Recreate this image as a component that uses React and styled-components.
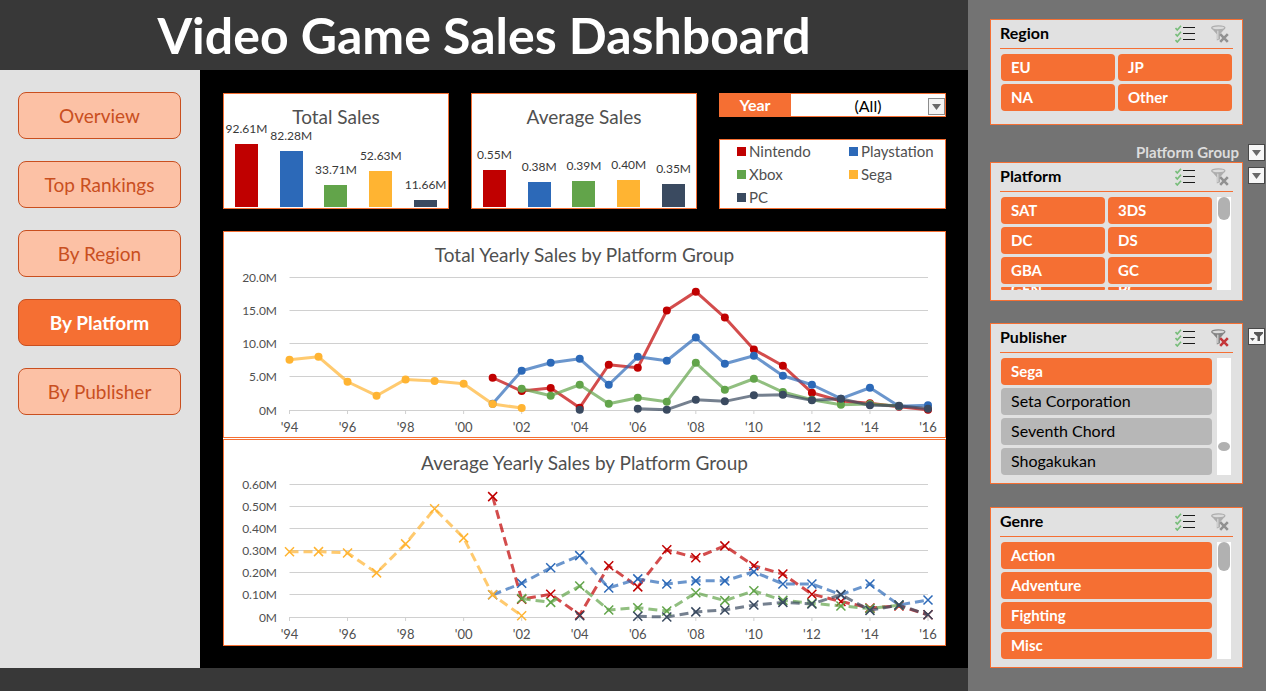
import React from "react";
import styled, { createGlobalStyle, css } from "styled-components";

const c = {
  orange: "#f56f33",
  peach: "#fcc1a5",
  rust: "#c94f1f",
  dark: "#383838",
  mid: "#737373",
  light: "#e1e1e1",
  text: "#505050",
  nintendo: "#c00000",
  playstation: "#2c69b8",
  xbox: "#62a44a",
  sega: "#ffb432",
  pc: "#3a4a60",
};

const Global = createGlobalStyle`
  *, *::before, *::after { box-sizing: border-box; }
  body { margin: 0; background: ${c.mid}; font-family: Lato, "Open Sans", sans-serif; }
  button, select { font-family: inherit; }
`;

const Page = styled.div`
  display: grid;
  grid-template-columns: minmax(0, 1fr) 298px;
  min-height: 100vh;
`;

const Left = styled.div`
  display: flex;
  flex-direction: column;
  background: ${c.dark};
`;

const Header = styled.header`
  display: flex;
  align-items: center;
  justify-content: center;
  height: 70px;
`;

const Title = styled.h1`
  margin: 0;
  color: #fff;
  font-size: 50px;
  line-height: 68px;
  font-weight: 700;
`;

const Body = styled.div`
  flex: 1;
  display: grid;
  grid-template-columns: 200px minmax(0, 1fr);
`;

const Footer = styled.footer`
  height: 23px;
`;

const Nav = styled.nav`
  display: flex;
  flex-direction: column;
  gap: 22px;
  padding: 22px 19px 22px 18px;
  background: ${c.light};
`;

const NavButton = styled.button`
  height: 47px;
  padding: 0;
  border: 1px solid ${c.rust};
  border-radius: 8px;
  background: ${(p) => (p.$active ? c.orange : c.peach)};
  color: ${(p) => (p.$active ? "#fff" : c.rust)};
  font-size: 19px;
  font-weight: ${(p) => (p.$active ? 700 : 400)};
`;

const Board = styled.main`
  display: flex;
  flex-direction: column;
  gap: 22px;
  padding: 23px 22px 22px 23px;
  background: #000;
`;

const TopRow = styled.div`
  display: grid;
  grid-template-columns: minmax(0, 226fr) minmax(0, 226fr) minmax(0, 227fr);
  gap: 22px;
`;

const Card = styled.section`
  border: 1px solid ${c.orange};
  background: #fff;
`;

const BarCard = styled(Card)`
  display: grid;
  height: 116px;

  > * {
    grid-area: 1 / 1;
  }
`;

const CardTitle = styled.h2`
  margin: 0;
  padding-top: 11px;
  color: ${c.text};
  font-size: 19px;
  line-height: 24px;
  font-weight: 400;
  text-align: center;
`;

const Bars = styled.div`
  display: grid;
  grid-template-columns: repeat(5, minmax(0, 1fr));
  align-items: end;
  padding-bottom: 1px;
`;

const BarColumn = styled.div`
  display: flex;
  flex-direction: column;
  align-items: center;
  gap: 7px;
`;

const BarLabel = styled.span`
  color: #383838;
  font-size: 12px;
  line-height: 16px;
  white-space: nowrap;
`;

const Bar = styled.div`
  width: 23px;
  background: ${(p) => p.$color};
`;

const FilterColumn = styled.div`
  display: flex;
  flex-direction: column;
  gap: 22px;
`;

const YearFilter = styled.div`
  display: grid;
  grid-template-columns: 72px 1fr;
  height: 24px;
`;

const YearLabel = styled.label`
  background: ${c.orange};
  color: #fff;
  font-size: 16px;
  line-height: 24px;
  font-weight: 700;
  text-align: center;
`;

const SelectWrap = styled.div`
  position: relative;
  display: grid;
`;

const YearSelect = styled.select`
  appearance: none;
  padding: 0;
  border: 1px solid ${c.orange};
  border-left: 0;
  border-radius: 0;
  background: #fff;
  color: #000;
  font-size: 16px;
  text-align: center;
  text-align-last: center;
`;

const SelectArrow = styled.span`
  position: absolute;
  right: 1px;
  bottom: 2px;
  display: grid;
  place-items: center;
  width: 17px;
  height: 17px;
  border: 1px solid #8c8c8c;
  background: #f4f4f4;
  pointer-events: none;
`;

const Legend = styled(Card)`
  flex: 1;
  display: grid;
  grid-template-columns: 1fr 1fr;
  grid-auto-rows: 22px;
  row-gap: 1px;
  padding-left: 17px;
`;

const LegendItem = styled.div`
  display: flex;
  align-items: center;
  gap: 3px;
  padding-left: ${(p) => (p.$second ? "8px" : "0")};
  color: ${c.text};
  font-size: 15px;
  line-height: 20px;
`;

const Swatch = styled.span`
  width: 9px;
  height: 9px;
  background: ${(p) => p.$color};
`;

const ChartStack = styled.div`
  display: grid;
  gap: 1px;
  background: #fff;
`;

const Plot = styled.svg`
  display: block;
  width: 100%;
  height: auto;
`;

const AxisText = styled.text`
  fill: ${c.text};
  font-size: ${(p) => p.$size}px;
`;

const Aside = styled.aside`
  display: grid;
  grid-template-columns: minmax(0, 1fr) 17px;
  column-gap: 5px;
  align-content: start;
  padding: 19px 1px 23px 22px;
`;

const Slicer = styled.section`
  grid-column: 1;
  margin-bottom: ${(p) => p.$after || 0}px;
  padding: 0 9px ${(p) => p.$bottom}px;
  border: 1px solid ${c.orange};
  background: ${c.light};
`;

const SlicerHead = styled.header`
  display: flex;
  align-items: center;
  gap: 16px;
  height: 29px;
  padding-right: 4px;
  border-bottom: 1px solid ${c.orange};
`;

const SlicerTitle = styled.h3`
  flex: 1;
  margin: 0;
  padding-bottom: 2px;
  color: #000;
  font-size: 16px;
  line-height: 20px;
  font-weight: 700;
`;

const IconButton = styled.button`
  display: grid;
  padding: 0;
  border: 0;
  background: none;
`;

const SlicerBody = styled.div`
  display: flex;
  gap: 5px;
  padding: 5px 1px 0;
`;

const Items = styled.div`
  flex: 1;
  display: grid;
  grid-template-columns: repeat(${(p) => p.$columns}, minmax(0, 1fr));
  gap: 3px;
`;

const Item = styled.button`
  display: flex;
  align-items: center;
  height: 27px;
  padding: 0 10px 2px;
  border: 0;
  border-radius: 4px;
  background: ${(p) => (p.$off ? "#b7b7b7" : c.orange)};
  color: ${(p) => (p.$off ? "#000" : "#fff")};
  font-size: ${(p) => (p.$off ? 16 : 15)}px;
  line-height: 20px;
  font-weight: ${(p) => (p.$off ? 400 : 700)};
  text-align: left;
  ${(p) =>
    p.$peek &&
    css`
      height: 3px;
      padding-bottom: 0;
      border-radius: 1px;
      overflow: hidden;
    `}
`;

const Track = styled.div`
  width: 14px;
  margin-right: 1px;
  padding: ${(p) => p.$offset}px 1px 0;
  background: #fff;
`;

const Thumb = styled.div`
  height: ${(p) => p.$size}px;
  border-radius: ${(p) => (p.$size < 12 ? "50%" : "6px")};
  background: #b1b1b1;
`;

const GroupLabel = styled.div`
  grid-column: 1;
  padding: 17px 4px 0 0;
  color: #dcdcdc;
  font-size: 15px;
  line-height: 20px;
  font-weight: 700;
  text-align: right;
`;

const DropButton = styled.button`
  grid-column: 2;
  align-self: ${(p) => (p.$end ? "end" : "start")};
  display: grid;
  place-items: center;
  width: 17px;
  height: 17px;
  margin: ${(p) => (p.$end ? "0 0 1px" : "5px 0 0")};
  padding: 0;
  border: 1px solid #484848;
  background: #f6f6f6;
`;

const Arrow = () => (
  <svg width="9" height="6" viewBox="0 0 9 6" aria-hidden="true">
    <path d="M0 0H9L4.5 6Z" fill="#686868" />
  </svg>
);

const FilteredIcon = () => (
  <svg width="15" height="15" viewBox="0 0 15 15" aria-hidden="true">
    <path d="M1 9H6L3.5 12Z" fill="#585858" />
    <path d="M5 3H14V4.5L11 7.5V12H8.500V7.500L5 4.500Z" fill="#585858" />
  </svg>
);

const MultiSelectIcon = () => (
  <svg width="20" height="18" viewBox="0 0 20 18" aria-hidden="true">
    {[3, 9, 15].map((y) => (
      <g key={y} fill="none">
        <path d={`M.5 ${y}L2.300 ${y + 2}L6 ${y - 2.3}`} stroke="#77bd7a" strokeWidth="1.600" />
        <path d={`M8 ${y - 0.5}H20`} stroke="#1a1a1a" />
      </g>
    ))}
  </svg>
);

const ClearIcon = ({ active }) => {
  const body = active ? "#858585" : "#adadad";
  return (
    <svg width="18" height="18" viewBox="0 0 18 18" aria-hidden="true">
      <path d="M.5 3.200L5.800 9.300V15.500L9 14.300V9.300L14.200 3.200Z" fill={body} />
      <path d="M6.800 5.500V14.300" stroke="#d6d6d6" strokeWidth="1.200" />
      <ellipse cx="7.300" cy="2.800" rx="6.600" ry="2" fill="#dcdcdc" stroke={body} strokeWidth="1.200" />
      <path d="M9.200 9.200L16.800 16.800M16.800 9.200L9.200 16.800" stroke={active ? "#c4373a" : "#919191"} strokeWidth="2.600" />
    </svg>
  );
};

const groups = [
  { key: "nintendo", name: "Nintendo" },
  { key: "playstation", name: "Playstation" },
  { key: "xbox", name: "Xbox" },
  { key: "sega", name: "Sega" },
  { key: "pc", name: "PC" },
];

const totalSales = [
  ["92.61M", 63],
  ["82.28M", 56],
  ["33.71M", 22],
  ["52.63M", 36],
  ["11.66M", 7],
];
const averageSales = [
  ["0.55M", 37],
  ["0.38M", 25],
  ["0.39M", 26],
  ["0.40M", 27],
  ["0.35M", 23],
];

// Each run is [first year, values...]; a series with missing years has several runs.
const totalYearly = {
  nintendo: [[2001, 4.85, 2.85, 3.3, 0.35, 6.8, 6.35, 14.95, 17.8, 13.9, 9.1, 6.65, 2.6, 1.35, 1, 0.5, 0.05]],
  playstation: [[2001, 0.95, 5.9, 7.1, 7.7, 3.8, 8, 7.4, 10.9, 6.95, 8.15, 5.15, 3.8, 1.7, 3.35, 0.55, 0.7]],
  xbox: [[2002, 3.2, 2.15, 3.8, 0.95, 1.85, 1.25, 7.1, 3.05, 4.7, 2.7, 1.55, 0.8, 0.9, 0.6]],
  sega: [[1994, 7.55, 8, 4.25, 2.15, 4.6, 4.35, 3.95, 0.9, 0.3]],
  pc: [[2004, 0.05], [2006, 0.2, 0.05, 1.55, 1.3, 2.2, 2.3, 1.45, 1.7, 0.7, 0.65, 0.2]],
};
const averageYearly = {
  nintendo: [[2001, 0.543, 0.08, 0.103, 0.009, 0.231, 0.136, 0.303, 0.267, 0.321, 0.231, 0.194, 0.103, 0.07, 0.041, 0.05, 0.01]],
  playstation: [[2001, 0.1, 0.152, 0.222, 0.277, 0.131, 0.172, 0.149, 0.163, 0.163, 0.204, 0.149, 0.149, 0.101, 0.149, 0.054, 0.077]],
  xbox: [[2002, 0.083, 0.066, 0.14, 0.032, 0.042, 0.027, 0.109, 0.074, 0.118, 0.075, 0.062, 0.05, 0.038, 0.053]],
  sega: [[1994, 0.294, 0.295, 0.289, 0.199, 0.33, 0.488, 0.357, 0.1, 0.006]],
  pc: [[2004, 0.006], [2006, 0.003, 0, 0.023, 0.032, 0.054, 0.066, 0.059, 0.101, 0.03, 0.054, 0.01]],
};

const X0 = 65.5;
const X1 = 704;
const PLOT_HEIGHT = 133;
const xOf = (year) => X0 + ((year - 1994) * (X1 - X0)) / 22;

function YearlyChart({ title, data, max, ticks, top, crosses }) {
  const base = top + PLOT_HEIGHT;
  const yOf = (v) => base - (v / max) * PLOT_HEIGHT;
  return (
    <Card>
      <CardTitle>{title}</CardTitle>
      <Plot viewBox="0 0 721 170" role="img" aria-label={title}>
        {ticks.map((label, i) => {
          const y = Math.floor(base - (i * PLOT_HEIGHT) / (ticks.length - 1)) + 0.5;
          return (
            <g key={label}>
              <path d={`M${X0} ${y}H${X1}`} stroke="#d0d0d0" />
              <AxisText $size={12} x="53" y={y + 4} textAnchor="end">
                {label}
              </AxisText>
            </g>
          );
        })}
        {Array.from({ length: 12 }, (_, i) => 1994 + i * 2).map((year) => (
          <g key={year}>
            <path d={`M${xOf(year)} ${base}v4`} stroke="#d0d0d0" />
            <AxisText $size={13} x={xOf(year)} y={base + 22} textAnchor="middle">
              {`'${String(year).slice(2)}`}
            </AxisText>
          </g>
        ))}
        {groups.map(({ key }) =>
          data[key].map(([start, ...values]) => {
            const points = values.map((v, i) => [xOf(start + i), yOf(v)]);
            return (
              <g key={start}>
                <polyline
                  points={points.join(" ")}
                  fill="none"
                  stroke={c[key]}
                  strokeWidth="3"
                  strokeOpacity="0.7"
                  strokeLinejoin="round"
                  strokeDasharray={crosses ? "9 5" : undefined}
                />
                {points.map(([x, y]) =>
                  crosses ? (
                    <path
                      key={x}
                      d={`M${x - 4.5} ${y - 4.5}l9 9m0 -9l-9 9`}
                      stroke={c[key]}
                      strokeWidth="1.500"
                    />
                  ) : (
                    <circle key={x} cx={x} cy={y} r="4" fill={c[key]} />
                  )
                )}
              </g>
            );
          })
        )}
      </Plot>
    </Card>
  );
}

function BarChart({ title, data }) {
  return (
    <BarCard>
      <CardTitle>{title}</CardTitle>
      <Bars>
        {data.map(([label, height], i) => (
          <BarColumn key={label}>
            <BarLabel>{label}</BarLabel>
            <Bar $color={c[groups[i].key]} style={{ height }} />
          </BarColumn>
        ))}
      </Bars>
    </BarCard>
  );
}

function SlicerPanel({ title, items, columns = 1, selected, peek = [], thumb, filtered, bottom, after }) {
  return (
    <Slicer $bottom={bottom} $after={after}>
      <SlicerHead>
        <SlicerTitle>{title}</SlicerTitle>
        <IconButton type="button" aria-label={`Multi-select ${title}`}>
          <MultiSelectIcon />
        </IconButton>
        <IconButton type="button" aria-label={`Clear ${title} filter`}>
          <ClearIcon active={filtered} />
        </IconButton>
      </SlicerHead>
      <SlicerBody>
        <Items $columns={columns}>
          {items.map((name) => (
            <Item key={name} type="button" $off={selected && name !== selected}>
              {name}
            </Item>
          ))}
          {peek.map((name) => (
            <Item key={name} type="button" $peek>
              {name}
            </Item>
          ))}
        </Items>
        {thumb && (
          <Track $offset={thumb[0]}>
            <Thumb $size={thumb[1]} />
          </Track>
        )}
      </SlicerBody>
    </Slicer>
  );
}

export default function App() {
  return (
    <>
      <Global />
      <Page>
        <Left>
          <Header>
            <Title>Video Game Sales Dashboard</Title>
          </Header>
          <Body>
            <Nav>
              {["Overview", "Top Rankings", "By Region", "By Platform", "By Publisher"].map((name) => (
                <NavButton key={name} type="button" $active={name === "By Platform"}>
                  {name}
                </NavButton>
              ))}
            </Nav>
            <Board>
              <TopRow>
                <BarChart title="Total Sales" data={totalSales} />
                <BarChart title="Average Sales" data={averageSales} />
                <FilterColumn>
                  <YearFilter>
                    <YearLabel htmlFor="year">Year</YearLabel>
                    <SelectWrap>
                      <YearSelect id="year">
                        <option>(All)</option>
                      </YearSelect>
                      <SelectArrow>
                        <Arrow />
                      </SelectArrow>
                    </SelectWrap>
                  </YearFilter>
                  <Legend>
                    {groups.map(({ key, name }, i) => (
                      <LegendItem key={key} $second={i % 2 === 1}>
                        <Swatch $color={c[key]} />
                        {name}
                      </LegendItem>
                    ))}
                  </Legend>
                </FilterColumn>
              </TopRow>
              <ChartStack>
                <YearlyChart
                  title="Total Yearly Sales by Platform Group"
                  data={totalYearly}
                  max={20}
                  ticks={["0M", "5.0M", "10.0M", "15.0M", "20.0M"]}
                  top={10}
                />
                <YearlyChart
                  title="Average Yearly Sales by Platform Group"
                  data={averageYearly}
                  max={0.6}
                  ticks={["0M", "0.10M", "0.20M", "0.30M", "0.40M", "0.50M", "0.60M"]}
                  top={9}
                  crosses
                />
              </ChartStack>
            </Board>
          </Body>
          <Footer />
        </Left>
        <Aside>
          <SlicerPanel title="Region" items={["EU", "JP", "NA", "Other"]} columns={2} bottom={13} />
          <GroupLabel>Platform Group</GroupLabel>
          <DropButton type="button" aria-label="Platform Group options" $end>
            <Arrow />
          </DropButton>
          <SlicerPanel
            title="Platform"
            items={["SAT", "3DS", "DC", "DS", "GBA", "GC"]}
            peek={["GEN", "PC"]}
            columns={2}
            thumb={[0, 23]}
            bottom={10}
            after={22}
          />
          <DropButton type="button" aria-label="Platform options">
            <Arrow />
          </DropButton>
          <SlicerPanel
            title="Publisher"
            items={["Sega", "Seta Corporation", "Seventh Chord", "Shogakukan"]}
            selected="Sega"
            thumb={[84, 9]}
            filtered
            bottom={8}
            after={23}
          />
          <DropButton type="button" aria-label="Publisher filter options">
            <FilteredIcon />
          </DropButton>
          <SlicerPanel
            title="Genre"
            items={["Action", "Adventure", "Fighting", "Misc"]}
            thumb={[0, 29]}
            bottom={8}
          />
        </Aside>
      </Page>
    </>
  );
}
